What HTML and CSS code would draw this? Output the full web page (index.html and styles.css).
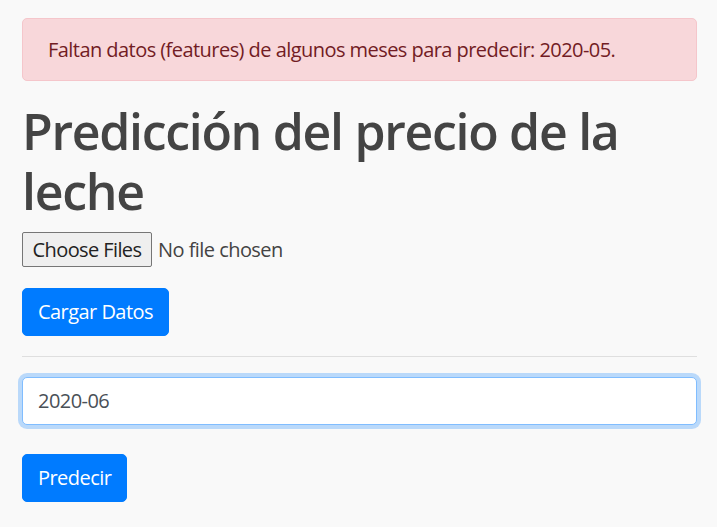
FILE: index.html
```html
<!DOCTYPE html>
<html lang="es">
<head>
<meta charset="utf-8">
<title>Predicción del precio de la leche</title>
<link rel="stylesheet" href="styles.css">
</head>
<body>
<div class="container">
  <div class="alert">Faltan datos (features) de algunos meses para predecir: 2020-05.</div>
  <h1 class="title">Predicción del precio de la leche</h1>
  <form class="upload">
    <div class="file-row">
      <button type="button" class="file-btn">Choose Files</button>
      <span class="file-name">No file chosen</span>
    </div>
    <button type="button" class="btn">Cargar Datos</button>
  </form>
  <hr class="divider">
  <form class="predict">
    <div class="field">2020-06</div>
    <button type="button" class="btn">Predecir</button>
  </form>
</div>
</body>
</html>
```

FILE: styles.css
```css
* { box-sizing: border-box; }

body {
  margin: 0;
  background: #f9f9f9;
  font-family: "Open Sans", "Noto Sans", sans-serif;
  font-size: 20px;
  line-height: 1.5;
  letter-spacing: -0.55px;
  color: #444;
}

.container {
  padding: 18px 20px 0 22px;
}

.alert {
  background: #f8d7da;
  border: 1px solid #f5c6cb;
  border-radius: 5px;
  color: #721c24;
  padding: 16px 25px 15px;
  margin-bottom: 20px;
}

.title {
  font-size: 50px;
  font-weight: 600;
  line-height: 60px;
  letter-spacing: -1.3px;
  margin: 0 0 11px;
  color: #444;
}

.upload {
  display: flex;
  flex-direction: column;
  align-items: flex-start;
  gap: 21px;
}

.file-row {
  display: flex;
  align-items: center;
  gap: 6px;
}

.file-btn {
  height: 35px;
  width: 130px;
  padding: 0;
  background: #efefef;
  border: 1px solid #767676;
  border-radius: 2px;
  font: inherit;
  letter-spacing: -0.6px;
  color: #222;
}

.file-name {
  color: #444;
}

.btn {
  font: inherit;
  letter-spacing: inherit;
  color: #fff;
  background: #007bff;
  border: 1px solid #007bff;
  border-radius: 5px;
  padding: 8px 15px;
  line-height: 30px;
  height: 48px;
}

.divider {
  border: 0;
  border-top: 1px solid rgba(0,0,0,.1);
  margin: 20px 0;
}

.predict {
  display: flex;
  flex-direction: column;
  align-items: flex-start;
  gap: 29px;
}

.field {
  width: 100%;
  height: 48px;
  padding: 8px 15px;
  line-height: 30px;
  background: #fff;
  border: 1px solid #80bdff;
  border-radius: 5px;
  box-shadow: 0 0 0 4px rgba(0,123,255,.25);
  color: #495057;
}
```
